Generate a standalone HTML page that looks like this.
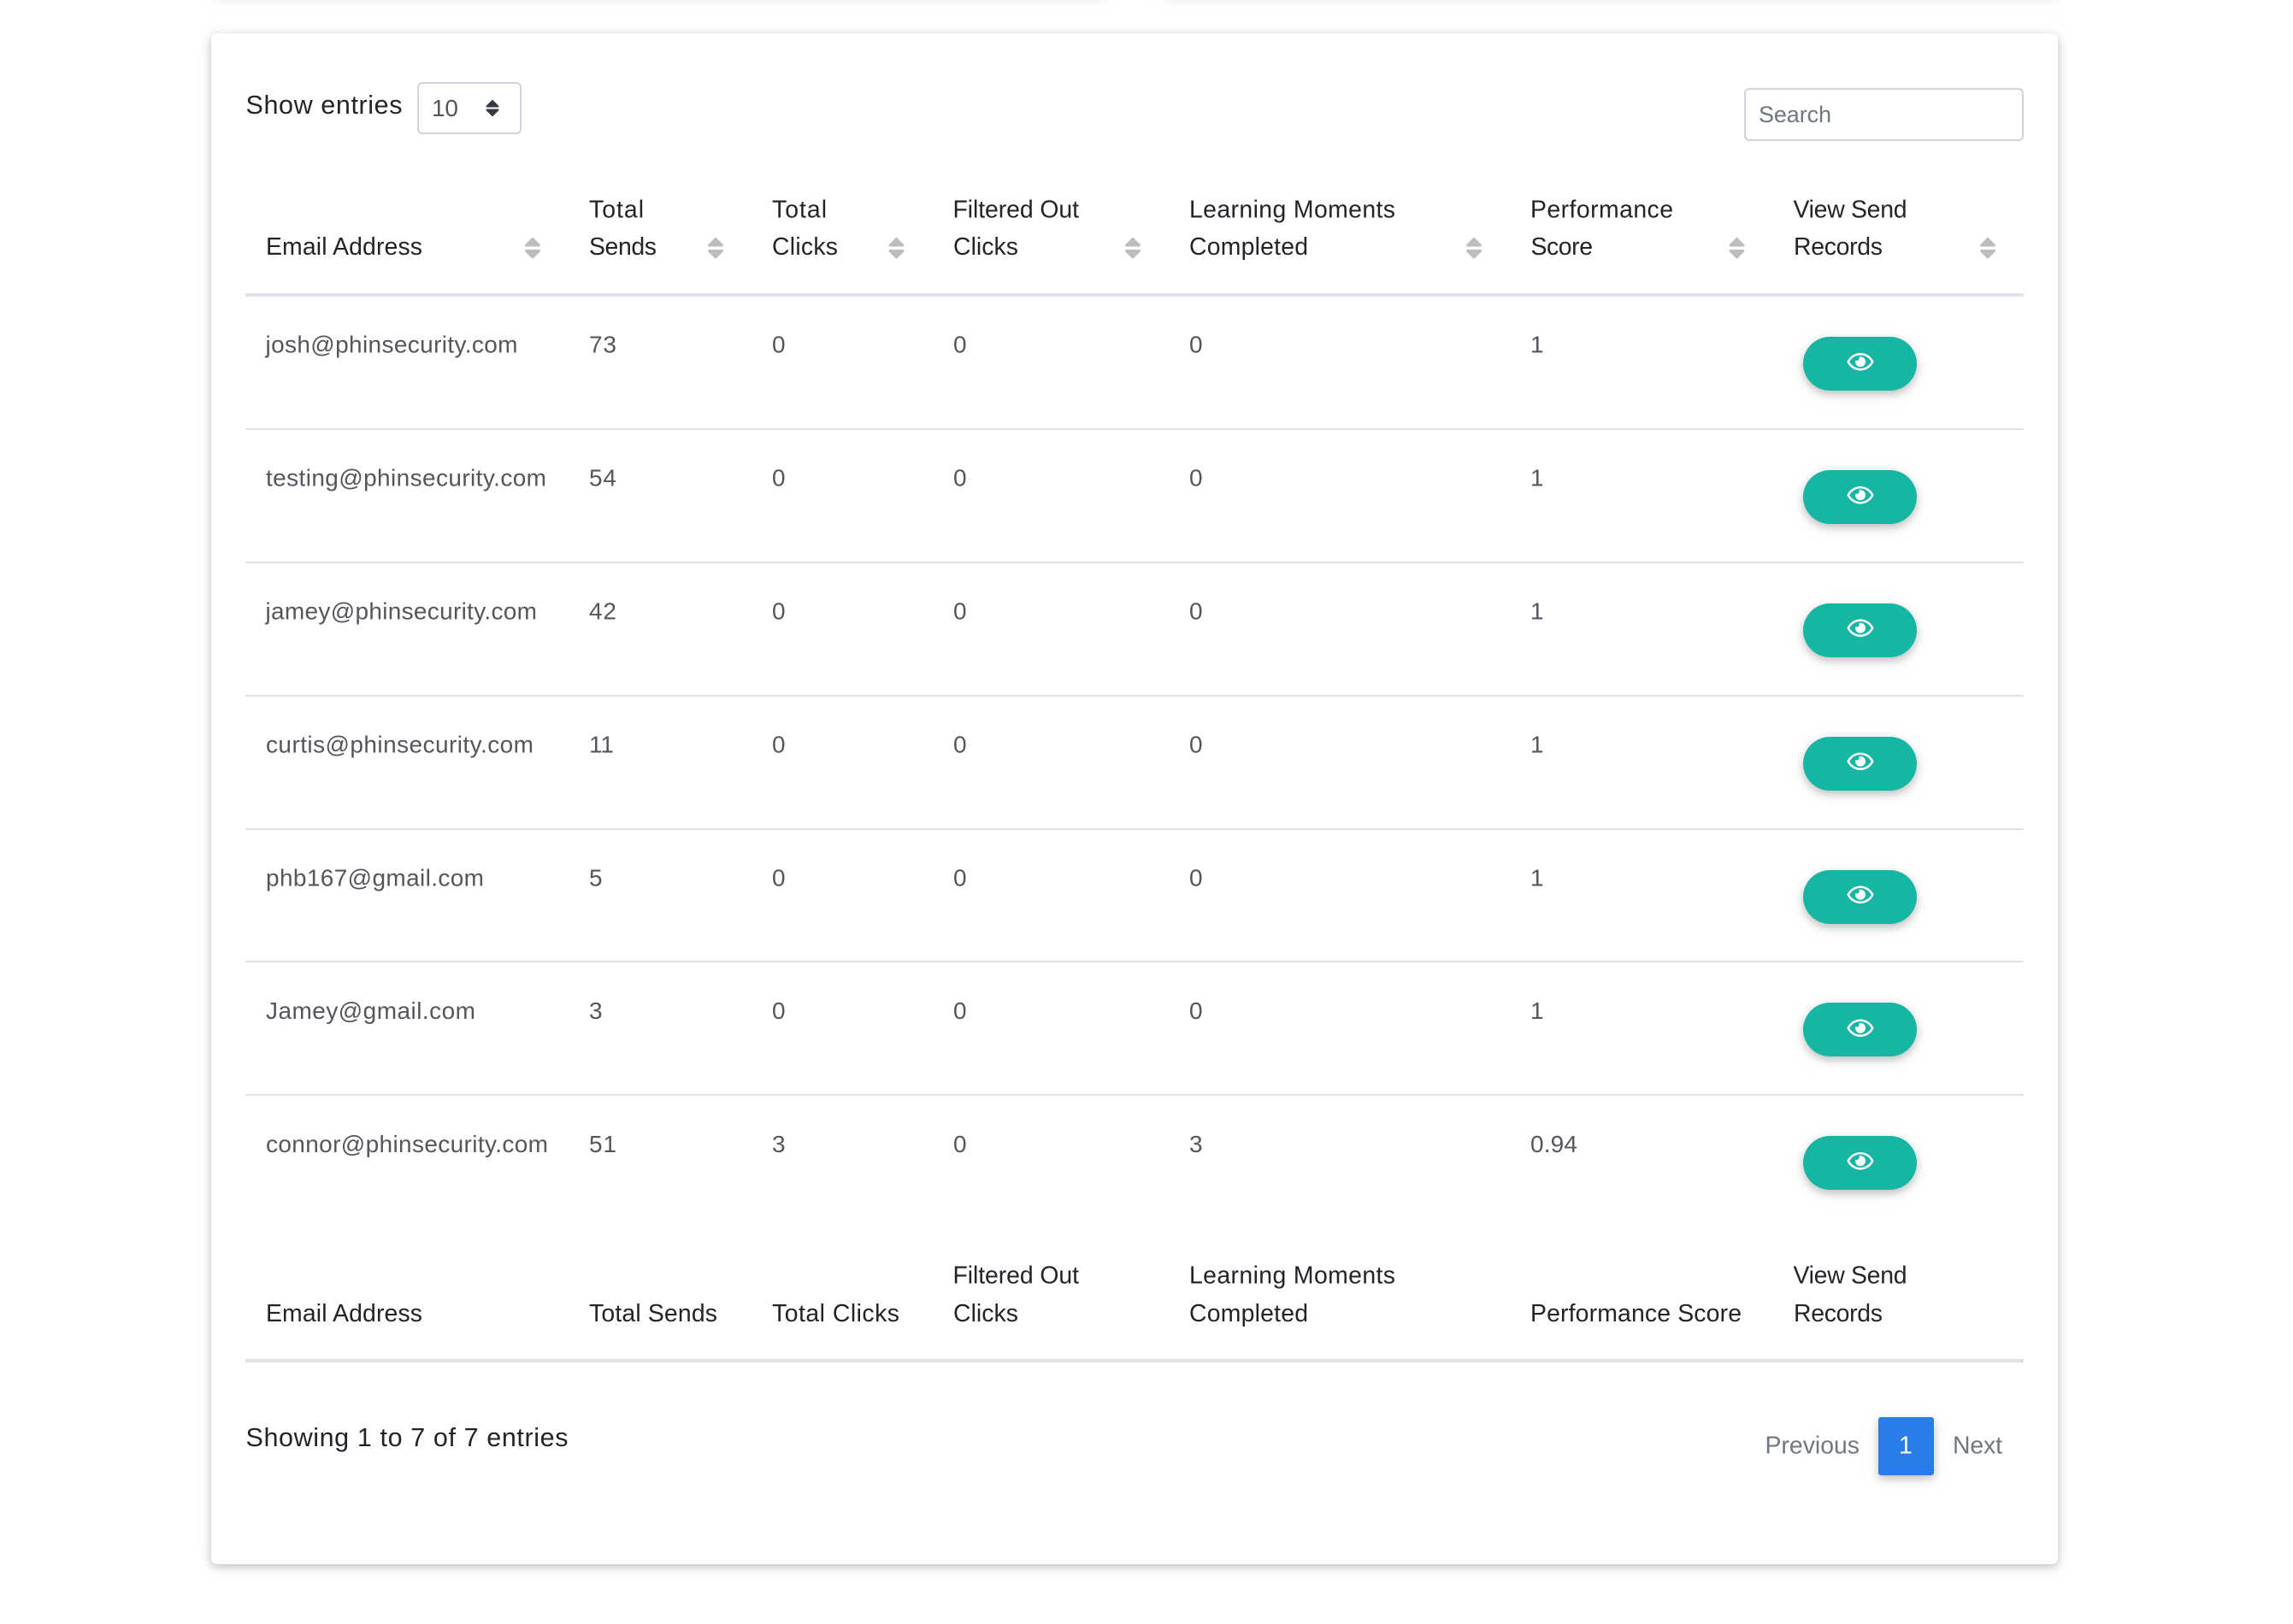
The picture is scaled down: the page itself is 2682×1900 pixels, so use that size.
<!DOCTYPE html>
<html lang="en">
<head>
<meta charset="utf-8">
<title>Send records</title>
<style>
html,body{margin:0;padding:0;background:#fff;width:2682px;height:1900px;overflow:hidden}
body{position:relative;font-family:"Liberation Sans",sans-serif}
.card{position:absolute;background:#fff;border-radius:7px;box-shadow:0 3px 9px rgba(0,0,0,.16),0 3px 17px rgba(0,0,0,.12)}
.rule{position:absolute;left:287px;width:2080px;background:#dee2e6}
.btn{position:absolute;left:2109px;width:133px;height:63px;border-radius:32px;background:#17b5a4;box-shadow:0 4px 9px rgba(0,0,0,.18),0 4px 17px rgba(0,0,0,.1)}
.ctl{position:absolute;box-sizing:border-box;border:2px solid #ced4da;border-radius:6px;background:#fff}
.page1{position:absolute;left:2197px;top:1658px;width:65px;height:68px;background:#2a7de9;border-radius:3px;box-shadow:0 4px 9px rgba(0,0,0,.18),0 4px 17px rgba(0,0,0,.1)}
svg.top{position:absolute;left:0;top:0}
text{font-family:"Liberation Sans",sans-serif;font-size:28.4px}
.h{fill:#212529}
.c{fill:#53575c;font-size:28px}
.m{fill:#6f7880}
.b{font-size:30.5px}
</style>
</head>
<body>
<div class="card" style="left:247px;top:-108px;width:1048px;height:100px"></div>
<div class="card" style="left:1360px;top:-108px;width:1047px;height:100px"></div>
<div class="card" style="left:247px;top:39px;width:2160px;height:1791px"></div>

<div class="ctl" style="left:488px;top:96px;width:122px;height:61px"></div>
<div class="ctl" style="left:2040px;top:103px;width:327px;height:62px"></div>

<div class="rule" style="top:343px;height:4px"></div>
<div class="rule" style="top:501px;height:2px"></div>
<div class="rule" style="top:657px;height:2px"></div>
<div class="rule" style="top:813px;height:2px"></div>
<div class="rule" style="top:969px;height:2px"></div>
<div class="rule" style="top:1124px;height:2px"></div>
<div class="rule" style="top:1280px;height:2px"></div>
<div class="rule" style="top:1590px;height:4px"></div>

<div class="btn" style="top:394px"></div>
<div class="btn" style="top:550px"></div>
<div class="btn" style="top:706px"></div>
<div class="btn" style="top:862px"></div>
<div class="btn" style="top:1018px"></div>
<div class="btn" style="top:1173px"></div>
<div class="btn" style="top:1329px"></div>
<div class="page1"></div>

<svg class="top" width="2682" height="1900" viewBox="0 0 2682 1900" xmlns="http://www.w3.org/2000/svg">
<defs>
<g id="sort" fill="#bdbdbd" stroke="#bdbdbd" stroke-width="3" stroke-linejoin="round">
<path d="M0 279.5L7.5 287H-7.500Z"/><path d="M0 301L7.500 293.500H-7.500Z"/>
</g>
<path id="eye" fill="#fff" d="M288 144a110.94 110.94 0 0 0-31.24 5 55.4 55.4 0 0 1 7.24 27 56 56 0 0 1-56 56 55.4 55.4 0 0 1-27-7.24A111.71 111.71 0 1 0 288 144zm284.52 97.4C518.29 135.59 410.93 64 288 64S57.68 135.64 3.48 241.41a32.35 32.35 0 0 0 0 29.19C57.71 376.41 165.07 448 288 448s230.32-71.64 284.52-177.41a32.35 32.35 0 0 0 0-29.19zM288 400c-98.65 0-189.09-55-237.93-144C98.91 167 189.34 112 288 112s189.09 55 237.93 144C477.1 345 386.66 400 288 400z"/>
</defs>

<text class="h b" x="287.500" y="133" textLength="183">Show entries</text>
<text class="c" x="505" y="136" textLength="31">10</text>
<path d="M576 118L582.500 124.500H569.500Z M576 135L582.500 128.500H569.500Z" fill="#343a40" stroke="#343a40" stroke-width="2" stroke-linejoin="round"/>
<text class="m" x="2057" y="143" textLength="85" style="font-size:27px">Search</text>

<!-- header -->
<text class="h" x="311" y="298" textLength="183">Email Address</text>
<text class="h" x="689" y="254.500" textLength="64">Total</text>
<text class="h" x="689" y="298" textLength="79">Sends</text>
<text class="h" x="903" y="254.500" textLength="64">Total</text>
<text class="h" x="903" y="298" textLength="77">Clicks</text>
<text class="h" x="1114.500" y="254.500" textLength="147.500">Filtered Out</text>
<text class="h" x="1115" y="298" textLength="76">Clicks</text>
<text class="h" x="1391" y="254.500" textLength="241">Learning Moments</text>
<text class="h" x="1391" y="298" textLength="139">Completed</text>
<text class="h" x="1790" y="254.500" textLength="167">Performance</text>
<text class="h" x="1790.500" y="298" textLength="72.500">Score</text>
<text class="h" x="2097.500" y="254.500" textLength="133">View Send</text>
<text class="h" x="2098" y="298" textLength="104">Records</text>
<use href="#sort" x="623"/>
<use href="#sort" x="837"/>
<use href="#sort" x="1048.500"/>
<use href="#sort" x="1325"/>
<use href="#sort" x="1724"/>
<use href="#sort" x="2031.500"/>
<use href="#sort" x="2325"/>

<!-- rows -->
<text class="c" x="310.500" y="412.500" textLength="295">josh@phinsecurity.com</text>
<text class="c" x="689" y="412.500" textLength="32">73</text>
<text class="c" x="903" y="412.500">0</text><text class="c" x="1115" y="412.500">0</text><text class="c" x="1391" y="412.500">0</text><text class="c" x="1790" y="412.500">1</text>

<text class="c" x="311" y="568.500" textLength="328">testing@phinsecurity.com</text>
<text class="c" x="689" y="568.500" textLength="32">54</text>
<text class="c" x="903" y="568.500">0</text><text class="c" x="1115" y="568.500">0</text><text class="c" x="1391" y="568.500">0</text><text class="c" x="1790" y="568.500">1</text>

<text class="c" x="310.500" y="724.500" textLength="317.500">jamey@phinsecurity.com</text>
<text class="c" x="689" y="724.500" textLength="32">42</text>
<text class="c" x="903" y="724.500">0</text><text class="c" x="1115" y="724.500">0</text><text class="c" x="1391" y="724.500">0</text><text class="c" x="1790" y="724.500">1</text>

<text class="c" x="311" y="880.500" textLength="313">curtis@phinsecurity.com</text>
<text class="c" x="689" y="880.500" textLength="29">11</text>
<text class="c" x="903" y="880.500">0</text><text class="c" x="1115" y="880.500">0</text><text class="c" x="1391" y="880.500">0</text><text class="c" x="1790" y="880.500">1</text>

<text class="c" x="311" y="1036.500" textLength="255">phb167@gmail.com</text>
<text class="c" x="689" y="1036.500">5</text>
<text class="c" x="903" y="1036.500">0</text><text class="c" x="1115" y="1036.500">0</text><text class="c" x="1391" y="1036.500">0</text><text class="c" x="1790" y="1036.500">1</text>

<text class="c" x="311" y="1192" textLength="245">Jamey@gmail.com</text>
<text class="c" x="689" y="1192">3</text>
<text class="c" x="903" y="1192">0</text><text class="c" x="1115" y="1192">0</text><text class="c" x="1391" y="1192">0</text><text class="c" x="1790" y="1192">1</text>

<text class="c" x="311" y="1348" textLength="330">connor@phinsecurity.com</text>
<text class="c" x="689" y="1348" textLength="32">51</text>
<text class="c" x="903" y="1348">3</text><text class="c" x="1115" y="1348">0</text><text class="c" x="1391" y="1348">3</text><text class="c" x="1790" y="1348" textLength="55">0.94</text>

<!-- eyes -->
<svg x="2160.500" y="409.500" width="31" height="27.500" viewBox="0 0 576 512"><use href="#eye"/></svg>
<svg x="2160.500" y="565.500" width="31" height="27.500" viewBox="0 0 576 512"><use href="#eye"/></svg>
<svg x="2160.500" y="721" width="31" height="27.500" viewBox="0 0 576 512"><use href="#eye"/></svg>
<svg x="2160.500" y="877" width="31" height="27.500" viewBox="0 0 576 512"><use href="#eye"/></svg>
<svg x="2160.500" y="1033" width="31" height="27.500" viewBox="0 0 576 512"><use href="#eye"/></svg>
<svg x="2160.500" y="1189" width="31" height="27.500" viewBox="0 0 576 512"><use href="#eye"/></svg>
<svg x="2160.500" y="1344.500" width="31" height="27.500" viewBox="0 0 576 512"><use href="#eye"/></svg>

<!-- footer -->
<text class="h" x="311" y="1546" textLength="183">Email Address</text>
<text class="h" x="689" y="1546" textLength="150">Total Sends</text>
<text class="h" x="903" y="1546" textLength="149">Total Clicks</text>
<text class="h" x="1114.500" y="1501.500" textLength="147.500">Filtered Out</text>
<text class="h" x="1115" y="1546" textLength="76">Clicks</text>
<text class="h" x="1391" y="1501.500" textLength="241">Learning Moments</text>
<text class="h" x="1391" y="1546" textLength="139">Completed</text>
<text class="h" x="1790" y="1546" textLength="247">Performance Score</text>
<text class="h" x="2097.500" y="1501.500" textLength="133">View Send</text>
<text class="h" x="2098" y="1546" textLength="104">Records</text>

<text class="h b" x="287.500" y="1692" textLength="377">Showing 1 to 7 of 7 entries</text>
<text class="m" x="2064.500" y="1700.500" textLength="110.500">Previous</text>
<text x="2221" y="1700.500" fill="#fff">1</text>
<text class="m" x="2284" y="1700.500" textLength="58">Next</text>
</svg>
</body>
</html>
